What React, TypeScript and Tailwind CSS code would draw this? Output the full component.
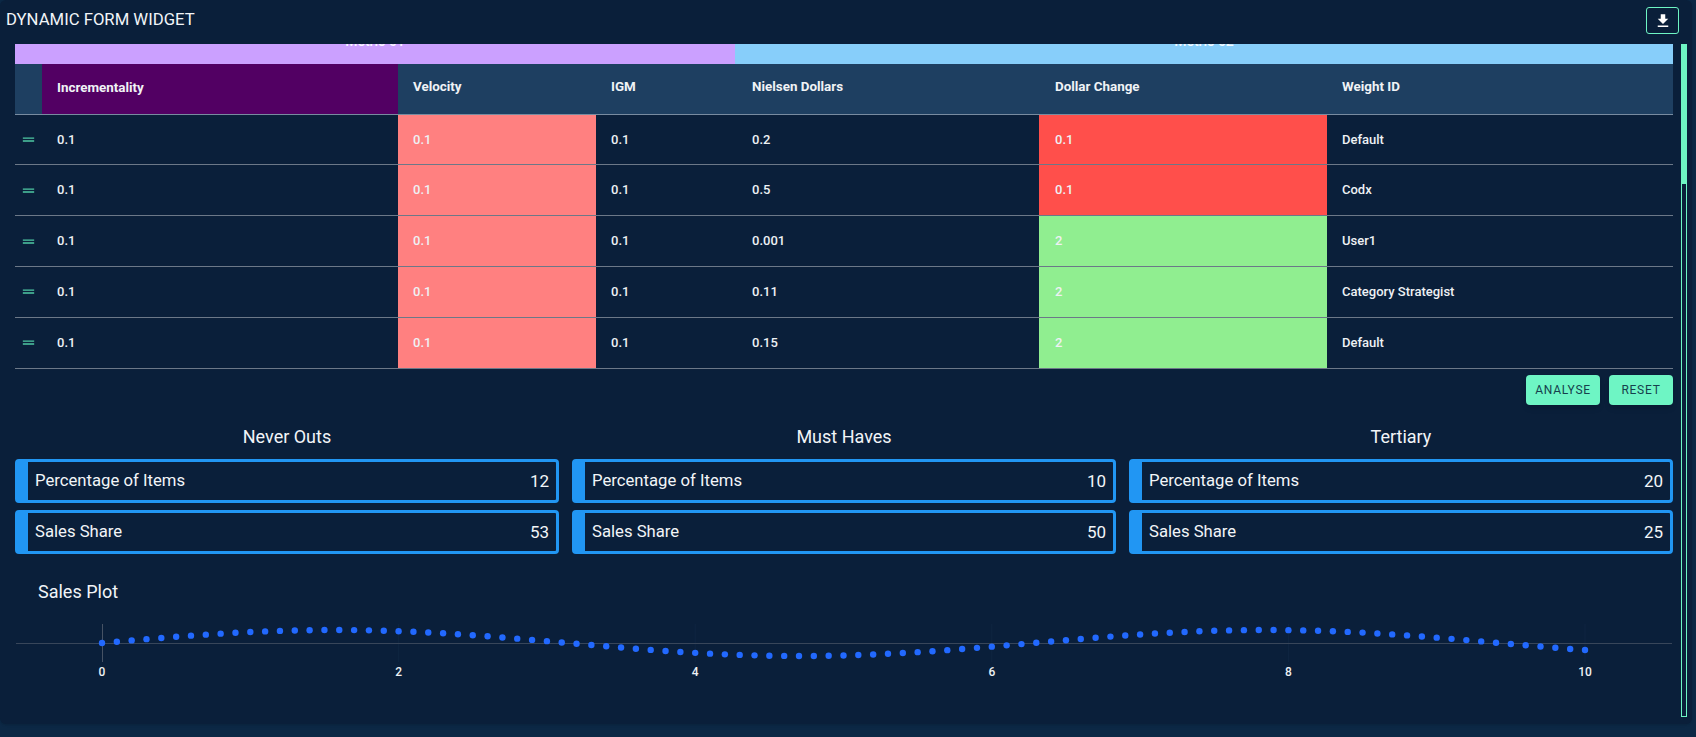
import React from "react";

const headers = ["Velocity", "IGM", "Nielsen Dollars"];
const rows = [
  { nielsen: "0.2", change: "0.1", changeBg: "bg-[#ff4f4b]", weight: "Default", nudge: "pt-[1px]" },
  { nielsen: "0.5", change: "0.1", changeBg: "bg-[#ff4f4b]", weight: "Codx", nudge: "" },
  { nielsen: "0.001", change: "2", changeBg: "bg-[#90ee90]", weight: "User1", nudge: "" },
  { nielsen: "0.11", change: "2", changeBg: "bg-[#90ee90]", weight: "Category Strategist", nudge: "" },
  { nielsen: "0.15", change: "2", changeBg: "bg-[#90ee90]", weight: "Default", nudge: "" },
];
const groups = [
  { title: "Never Outs", items: 12, share: 53 },
  { title: "Must Haves", items: 10, share: 50 },
  { title: "Tertiary", items: 20, share: 25 },
];
const gridCols = "grid grid-cols-[27px_356px_198px_141px_302px_288px_346px]";
const dots = Array.from({ length: 101 }, (_, i) => i / 10);
const X = (v: number) => 87 + v * 148.3;
const Y = (v: number) => 28 - 13 * Math.sin(v);

function StatRow({ label, value }: { label: string; value: number }) {
  return (
    <div className="flex h-[44px] items-center justify-between rounded-[4px] border-[3px] border-l-[13px] border-[#2196f3] pl-[7px] pr-[7px] leading-[24px] text-[#f2f5f8]">
      <span className="text-[16.7px]">{label}</span>
      <span className="text-[17px]">{value}</span>
    </div>
  );
}

export default function App() {
  return (
    <div className="h-[737px] w-[1696px] overflow-hidden bg-[#0c2845] font-['Roboto',sans-serif]">
      <div className="relative h-[724px] w-[1692px] rounded-[6px] bg-[#0a1f3a] shadow-sm">
        <header className="flex h-[44px] items-start justify-between pl-[6px] pr-[13px]">
          <h1 className="mt-[8px] text-[16.7px] leading-[24px] text-[#f2f5f8]">DYNAMIC FORM WIDGET</h1>
          <button className="mt-[7px] flex h-[27px] w-[33px] items-center justify-center rounded-[3px] border border-[#6ef5c4]">
            <svg viewBox="0 0 24 24" className="h-[18px] w-[18px] fill-white">
              <path d="M19 9h-4V3H9v6H5l7 7 7-7zM5 18v2h14v-2H5z" />
            </svg>
          </button>
        </header>

        <main className="w-[1673px] pl-[15px]">
          <div className="flex h-[20px] text-[14px] font-medium text-white/90">
            <div className="flex w-[720px] justify-center overflow-hidden bg-[#cba0ff]">
              <span className="mt-[-12px] leading-[18px]">Metric 01</span>
            </div>
            <div className="flex w-[938px] justify-center overflow-hidden bg-[#87cefa]">
              <span className="mt-[-12px] leading-[18px]">Metric 02</span>
            </div>
          </div>

          <div className={`${gridCols} h-[50.6px] border-b border-white/40 bg-[#1e3f61] text-[13.4px] font-bold leading-[16px] text-[#f0f3f6]`}>
            <div />
            <div className="flex items-center bg-[#520063] pb-[1px] pl-[15px]">Incrementality</div>
            {headers.map((h) => (
              <div key={h} className="flex items-center pb-[4px] pl-[15px]">{h}</div>
            ))}
            <div className="flex items-center pb-[4px] pl-[16px]">Dollar Change</div>
            <div className="flex items-center pb-[4px] pl-[15px]">Weight ID</div>
          </div>

          {rows.map((r, i) => (
            <div key={i} className={`${gridCols} h-[50.8px] border-b border-white/40 text-[13px] font-medium leading-[16px] text-[#eef1f4]`}>
              <div className={`flex items-center pl-[5px] ${r.nudge}`}>
                <svg viewBox="0 0 24 24" className="h-[17px] w-[17px] fill-[#4fc9a4]">
                  <path d="M20 9H4v2h16V9zM4 15h16v-2H4v2z" />
                </svg>
              </div>
              <div className={`flex items-center pl-[15px] ${r.nudge}`}>0.1</div>
              <div className={`flex items-center bg-[#ff8080] pl-[15px] ${r.nudge}`}>0.1</div>
              <div className={`flex items-center pl-[15px] ${r.nudge}`}>0.1</div>
              <div className={`flex items-center pl-[15px] ${r.nudge}`}>{r.nielsen}</div>
              <div className={`flex items-center pl-[16px] ${r.changeBg} ${r.nudge}`}>{r.change}</div>
              <div className={`flex items-center pl-[15px] ${r.nudge}`}>{r.weight}</div>
            </div>
          ))}

          <div className="mt-[6.4px] flex justify-end gap-[9px] text-[12px] font-normal tracking-[0.75px] text-[#163f4d]">
            <button className="h-[30px] w-[74px] rounded-[4px] bg-[#6ef5c4] shadow-md">ANALYSE</button>
            <button className="h-[30px] w-[64px] rounded-[4px] bg-[#6ef5c4] shadow-md">RESET</button>
          </div>

          <div className="mt-[20px] grid grid-cols-3 gap-x-[13px]">
            {groups.map((g) => (
              <section key={g.title} className="flex flex-col">
                <h2 className="mb-[10px] text-center text-[18px] leading-[24px] text-[#f2f5f8]">{g.title}</h2>
                <div className="flex flex-col gap-[7px]">
                  <StatRow label="Percentage of Items" value={g.items} />
                  <StatRow label="Sales Share" value={g.share} />
                </div>
              </section>
            ))}
          </div>

          <h2 className="mt-[26px] pl-[23px] text-[18px] leading-[24px] text-[#f2f5f8]">Sales Plot</h2>
          <svg width="1658" height="80" className="mt-[11px] block">
            {[2, 4, 6, 8, 10].map((v) => (
              <line key={v} x1={X(v)} x2={X(v)} y1="9" y2="47" stroke="#0f2541" strokeWidth="1" />
            ))}
            <line x1="1" x2="1657" y1="28.5" y2="28.5" stroke="#38465a" strokeWidth="1" />
            <line x1="87.5" x2="87.5" y1="9" y2="47" stroke="#465264" strokeWidth="1" />
            {dots.map((v) => (
              <circle key={v} cx={X(v)} cy={Y(v)} r="3.2" fill="#2269ff" />
            ))}
            {[0, 2, 4, 6, 8, 10].map((v) => (
              <text key={v} x={X(v)} y="61" textAnchor="middle" fontSize="12" fontWeight="500" fill="#eef1f4">{v}</text>
            ))}
          </svg>
        </main>

        <div className="absolute left-[1681px] top-[44px] h-[673px] w-[6px] border border-[#6ef5c4]">
          <div className="h-[139px] bg-[#6ef5c4]" />
        </div>
      </div>
    </div>
  );
}
